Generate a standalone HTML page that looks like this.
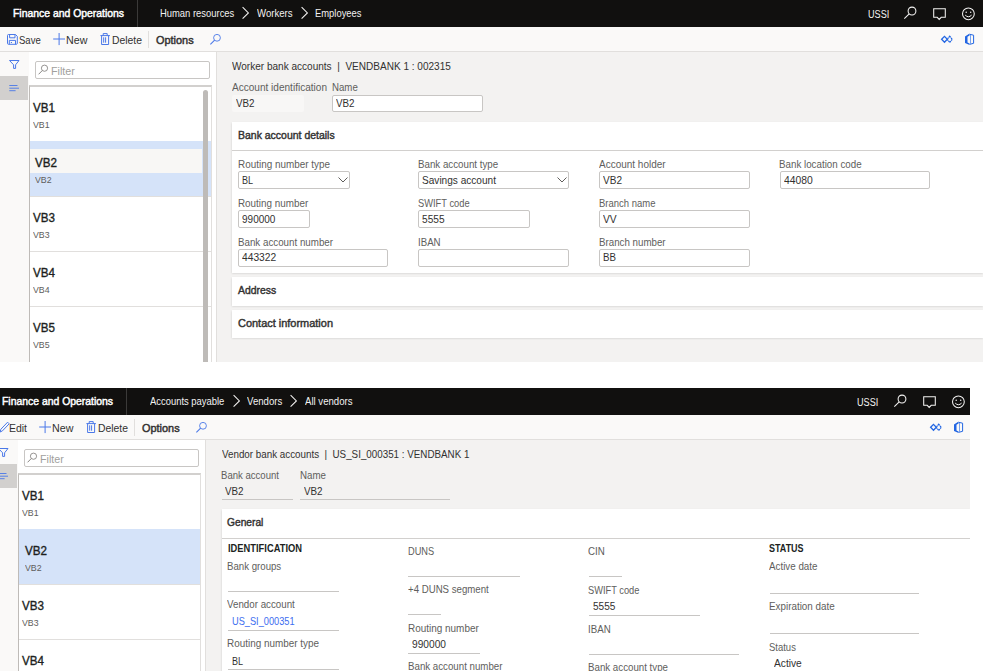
<!DOCTYPE html>
<html><head><meta charset="utf-8"><title>Bank accounts</title>
<style>
html,body{margin:0;padding:0;background:#fff;}
body{width:1000px;height:671px;position:relative;overflow:hidden;font-family:"Liberation Sans", sans-serif;}
.scr{position:absolute;overflow:hidden;}
.r{position:absolute;}
svg.r{overflow:visible;}
.t{position:absolute;line-height:1;white-space:nowrap;transform-origin:0 0;}
</style></head><body>
<div class="scr" style="left:0;top:0;width:983px;height:362px">
<div class="r" style="left:0.00px;top:0.00px;width:983.00px;height:27.00px;background:#11100f"></div>
<div class="t" style="left:13.00px;top:7.91px;font-size:10.5px;font-weight:400;color:#ffffff;transform:scaleX(0.9904);-webkit-text-stroke:0.45px #ffffff;">Finance and Operations</div>
<div class="r" style="left:136.50px;top:0.00px;width:1.00px;height:27.00px;background:#3b3a39"></div>
<div class="t" style="left:159.70px;top:8.11px;font-size:10.5px;font-weight:400;color:#f3f2f1;transform:scaleX(0.8965);">Human resources</div>
<svg class="r" style="left:242.30px;top:6px" width="9" height="15" viewBox="0 0 9 15"><path d="M0.6 1.1 L6.4 6.9 L0.6 12.7" fill="none" stroke="#f3f2f1" stroke-width="1.05"/></svg>
<div class="t" style="left:257.00px;top:8.11px;font-size:10.5px;font-weight:400;color:#f3f2f1;transform:scaleX(0.9150);">Workers</div>
<svg class="r" style="left:300.60px;top:6px" width="9" height="15" viewBox="0 0 9 15"><path d="M0.6 1.1 L6.4 6.9 L0.6 12.7" fill="none" stroke="#f3f2f1" stroke-width="1.05"/></svg>
<div class="t" style="left:314.90px;top:8.11px;font-size:10.5px;font-weight:400;color:#f3f2f1;transform:scaleX(0.8950);">Employees</div>
<div class="t" style="left:867.50px;top:9.83px;font-size:10.0px;font-weight:400;color:#f3f2f1;transform:scaleX(0.9124);">USSI</div>
<div class="r" style="left:0px;top:0;width:990px;height:27px">
<svg class="r" style="left:900px;top:4px" width="20" height="18" viewBox="900 4 20 18"><circle cx="912" cy="11" r="3.9" fill="none" stroke="#f3f2f1" stroke-width="1.05"/><path d="M909.2 13.8 L904.3 18.7" stroke="#f3f2f1" stroke-width="1.1"/></svg>
<svg class="r" style="left:930px;top:6px" width="20" height="16" viewBox="930 6 20 16"><path d="M933.7 8.7 H945.3 V17.3 H941.2 L939.2 19.4 L937.2 17.3 H933.7 Z" fill="none" stroke="#f3f2f1" stroke-width="1.05"/></svg>
<svg class="r" style="left:960px;top:6px" width="18" height="16" viewBox="960 6 18 16"><circle cx="968.4" cy="13.8" r="5.9" fill="none" stroke="#f3f2f1" stroke-width="1.05"/><circle cx="966.2" cy="12.2" r="0.75" fill="#f3f2f1"/><circle cx="970.7" cy="12.2" r="0.75" fill="#f3f2f1"/><path d="M965.2 15.1 Q968.4 18.4 971.6 15.1" fill="none" stroke="#f3f2f1" stroke-width="1"/></svg>
</div>
<div class="r" style="left:0.00px;top:27.00px;width:983.00px;height:24.00px;background:#faf9f8"></div>
<div class="r" style="left:0.00px;top:51.00px;width:983.00px;height:1.00px;background:#e1dfdd"></div>
<svg class="r" style="left:5px;top:32px" width="15" height="15" viewBox="5 32 15 15"><path d="M7.5 35.5 Q7.5 34.5 8.5 34.5 H15.5 L17.3 36.3 V43.3 Q17.3 44.3 16.3 44.3 H8.5 Q7.5 44.3 7.5 43.3 Z" fill="none" stroke="#4a78e8" stroke-width="1"/><path d="M9.6 34.5 V37.8 H15 V34.5 M9.3 44.3 V40.4 H15.5 V44.3" fill="none" stroke="#4a78e8" stroke-width="1"/><path d="M10.8 42.5 H12" stroke="#4a78e8" stroke-width="1"/></svg>
<div class="t" style="left:19.40px;top:35.06px;font-size:10.8px;font-weight:400;color:#323130;transform:scaleX(0.8818);">Save</div>
<div class="r" style="left:0px;top:0;width:240px;height:52px">
<svg class="r" style="left:50px;top:30px" width="18" height="18" viewBox="50 30 18 18"><path d="M59.1 33 V45.1 M53.2 39 H65" stroke="#4a78e8" stroke-width="1"/></svg>
<svg class="r" style="left:98px;top:31px" width="14" height="16" viewBox="98 31 14 16"><path d="M100.4 35.6 H109.9 M103.2 35.6 V33.6 H107.2 V35.6 M101.6 35.6 V44.5 H108.6 V35.6" fill="none" stroke="#4a78e8" stroke-width="1"/><path d="M103.7 37.3 V42.7 M105.6 37.3 V42.7" stroke="#4a78e8" stroke-width="1"/></svg>
</div>
<div class="t" style="left:66.40px;top:35.06px;font-size:10.8px;font-weight:400;color:#323130;transform:scaleX(0.9903);">New</div>
<div class="t" style="left:112.40px;top:35.06px;font-size:10.8px;font-weight:400;color:#323130;transform:scaleX(0.9610);">Delete</div>
<div class="r" style="left:148.00px;top:31.00px;width:1.00px;height:17.00px;background:#e1dfdd"></div>
<div class="t" style="left:155.80px;top:35.26px;font-size:10.8px;font-weight:400;color:#323130;transform:scaleX(1.0102);-webkit-text-stroke:0.45px #323130;">Options</div>
<div class="r" style="left:0px;top:0;width:240px;height:52px">
<svg class="r" style="left:206px;top:30px" width="18" height="18" viewBox="206 30 18 18"><circle cx="217" cy="37.8" r="3.4" fill="none" stroke="#4a78e8" stroke-width="0.9"/><path d="M214.6 40.2 L210.4 44.4" stroke="#4a78e8" stroke-width="1.1"/></svg>
</div>
<div class="r" style="left:0px;top:0;width:990px;height:52px">
<svg class="r" style="left:938px;top:32px" width="18" height="14" viewBox="938 32 18 14"><path d="M944.5 36.4 L947.3 39.3 L944.5 42.2 L941.6 39.3 Z" fill="none" stroke="#2266e3" stroke-width="1.3"/><path d="M949.7 36.2 L952.3 39.3 L949.7 42.4 L947.2 39.3 Z" fill="none" stroke="#2266e3" stroke-width="1.2" stroke-dasharray="1.6 0.5"/></svg>
<svg class="r" style="left:962px;top:31px" width="15" height="16" viewBox="962 31 15 16"><path d="M965 36.5 L969.6 33.5 V35.6 L967.5 36.7 V42.6 L969.6 43.4 V44.9 L965 43 Z" fill="#2266e3"/><path d="M969.8 34.3 L973.6 35.2 V43.3 L969.8 44.3" fill="none" stroke="#2266e3" stroke-width="1"/><path d="M970.5 35 V43.6" stroke="#2266e3" stroke-width="0.6"/></svg>
</div>
<div class="r" style="left:0.00px;top:52.00px;width:29.00px;height:310.00px;background:#faf9f8"></div>
<svg class="r" style="left:7px;top:58px" width="15" height="13" viewBox="7 58 15 13"><path d="M9.5 60.5 H19 L15.6 64.8 V68.4 H13.6 V64.8 Z" fill="none" stroke="#4a78e8" stroke-width="1" stroke-linejoin="round"/></svg>
<div class="r" style="left:0.00px;top:76.00px;width:28.00px;height:24.00px;background:#d2d0ce"></div>
<svg class="r" style="left:7px;top:82px" width="15" height="11" viewBox="7 82 15 11"><path d="M9.3 85.5 H17.5 M9.3 88.2 H19 M9.3 90.7 H15.6" stroke="#4a78e8" stroke-width="0.9"/></svg>
<div class="r" style="left:29.00px;top:52.00px;width:187.00px;height:310.00px;background:#ffffff"></div>
<div class="r" style="left:35.30px;top:61.20px;width:174.70px;height:17.40px;background:#fff;border:1px solid #c8c6c4;border-radius:2px;box-sizing:border-box"></div>
<svg class="r" style="left:36px;top:63px" width="14" height="14" viewBox="36 63 14 14"><circle cx="44.5" cy="68.2" r="3.1" fill="none" stroke="#8a8886" stroke-width="0.9"/><path d="M42.3 70.5 L38.6 74.3" stroke="#8a8886" stroke-width="1"/></svg>
<div class="t" style="left:51.40px;top:65.86px;font-size:10.8px;font-weight:400;color:#a19f9d;transform:scaleX(0.9917);">Filter</div>
<div class="r" style="left:29.00px;top:85.00px;width:182.50px;height:277.00px;border:1px solid #e1dfdd;border-left:1px solid #bebbb8;border-top:2px solid #d2d0ce;box-sizing:border-box;border-bottom:none"></div>
<div class="t" style="left:32.90px;top:101.53px;font-size:12.6px;font-weight:400;color:#201f1e;transform:scaleX(0.9239);-webkit-text-stroke:0.35px #201f1e;">VB1</div>
<div class="t" style="left:33.00px;top:120.47px;font-size:9.6px;font-weight:400;color:#605e5c;transform:scaleX(0.9151);">VB1</div>
<div class="r" style="left:30.00px;top:141.00px;width:180.50px;height:1.00px;background:#e1dfdd"></div>
<div class="r" style="left:30.00px;top:141.00px;width:180.50px;height:8.00px;background:#d5e3f9"></div>
<div class="r" style="left:30.00px;top:149.00px;width:180.50px;height:24.00px;background:#f8f7f5"></div>
<div class="r" style="left:202.00px;top:149.00px;width:8.50px;height:24.00px;background:#d5e3f9"></div>
<div class="r" style="left:30.00px;top:173.00px;width:180.50px;height:23.00px;background:#d5e3f9"></div>
<div class="t" style="left:35.30px;top:156.53px;font-size:12.6px;font-weight:400;color:#201f1e;transform:scaleX(0.9239);-webkit-text-stroke:0.35px #201f1e;">VB2</div>
<div class="t" style="left:35.40px;top:175.47px;font-size:9.6px;font-weight:400;color:#605e5c;transform:scaleX(0.9151);">VB2</div>
<div class="r" style="left:30.00px;top:196.00px;width:180.50px;height:1.00px;background:#e1dfdd"></div>
<div class="t" style="left:32.90px;top:211.53px;font-size:12.6px;font-weight:400;color:#201f1e;transform:scaleX(0.9239);-webkit-text-stroke:0.35px #201f1e;">VB3</div>
<div class="t" style="left:33.00px;top:230.47px;font-size:9.6px;font-weight:400;color:#605e5c;transform:scaleX(0.9151);">VB3</div>
<div class="r" style="left:30.00px;top:251.00px;width:180.50px;height:1.00px;background:#e1dfdd"></div>
<div class="t" style="left:32.90px;top:266.53px;font-size:12.6px;font-weight:400;color:#201f1e;transform:scaleX(0.9239);-webkit-text-stroke:0.35px #201f1e;">VB4</div>
<div class="t" style="left:33.00px;top:285.47px;font-size:9.6px;font-weight:400;color:#605e5c;transform:scaleX(0.9151);">VB4</div>
<div class="r" style="left:30.00px;top:306.00px;width:180.50px;height:1.00px;background:#e1dfdd"></div>
<div class="t" style="left:32.90px;top:321.53px;font-size:12.6px;font-weight:400;color:#201f1e;transform:scaleX(0.9239);-webkit-text-stroke:0.35px #201f1e;">VB5</div>
<div class="t" style="left:33.00px;top:340.47px;font-size:9.6px;font-weight:400;color:#605e5c;transform:scaleX(0.9151);">VB5</div>
<div class="r" style="left:202.50px;top:89.50px;width:5.00px;height:272.50px;background:#bebbb8;border-radius:2.5px 2.5px 0 0"></div>
<div class="r" style="left:216.00px;top:52.00px;width:767.00px;height:310.00px;background:#f3f2f1"></div>
<div class="r" style="left:216.00px;top:52.00px;width:1.00px;height:310.00px;background:#e1dfdd"></div>
<div class="t" style="left:231.60px;top:60.89px;font-size:11.0px;font-weight:400;color:#323130;transform:scaleX(0.9121);">Worker bank accounts&nbsp; |&nbsp; VENDBANK 1 : 002315</div>
<div class="t" style="left:231.60px;top:82.96px;font-size:10.2px;font-weight:400;color:#605e5c;transform:scaleX(0.9867);">Account identification</div>
<div class="t" style="left:332.40px;top:82.96px;font-size:10.2px;font-weight:400;color:#605e5c;transform:scaleX(0.9490);">Name</div>
<div class="r" style="left:232.00px;top:95.00px;width:71.70px;height:17.00px;background:#f8f7f6;border-radius:2px"></div>
<div class="t" style="left:235.60px;top:98.09px;font-size:11.0px;font-weight:400;color:#323130;transform:scaleX(0.8944);">VB2</div>
<div class="r" style="left:332.20px;top:94.60px;width:151.20px;height:17.60px;background:#fff;border:1px solid #c8c6c4;border-radius:2px;box-sizing:border-box"></div>
<div class="t" style="left:335.90px;top:98.09px;font-size:11.0px;font-weight:400;color:#323130;transform:scaleX(0.8944);">VB2</div>
<div class="r" style="left:231.80px;top:121.60px;width:751.20px;height:151.20px;background:#fff;box-shadow:0 1.3px 2.2px rgba(0,0,0,0.16)"></div>
<div class="t" style="left:237.80px;top:130.79px;font-size:10.4px;font-weight:400;color:#323130;transform:scaleX(1.0084);-webkit-text-stroke:0.4px #323130;">Bank account details</div>
<div class="r" style="left:231.80px;top:150.40px;width:751.20px;height:1.00px;background:#d2d0ce"></div>
<div class="t" style="left:237.80px;top:159.66px;font-size:10.2px;font-weight:400;color:#605e5c;transform:scaleX(0.9727);">Routing number type</div>
<div class="r" style="left:238.40px;top:171.40px;width:111.20px;height:17.60px;background:#fff;border:1px solid #c8c6c4;border-radius:2px;box-sizing:border-box"></div>
<div class="t" style="left:242.10px;top:174.89px;font-size:11.0px;font-weight:400;color:#323130;transform:scaleX(0.8241);">BL</div>
<svg class="r" style="left:337.6px;top:176.9px" width="10" height="6" viewBox="0 0 10 6"><path d="M0.5 0.5 L5 5 L9.5 0.5" fill="none" stroke="#605e5c" stroke-width="1"/></svg>
<div class="t" style="left:237.80px;top:198.76px;font-size:10.2px;font-weight:400;color:#605e5c;transform:scaleX(0.9683);">Routing number</div>
<div class="r" style="left:238.40px;top:210.20px;width:71.40px;height:17.60px;background:#fff;border:1px solid #c8c6c4;border-radius:2px;box-sizing:border-box"></div>
<div class="t" style="left:242.10px;top:213.69px;font-size:11.0px;font-weight:400;color:#323130;transform:scaleX(0.9096);">990000</div>
<div class="t" style="left:237.80px;top:237.56px;font-size:10.2px;font-weight:400;color:#605e5c;transform:scaleX(0.9585);">Bank account number</div>
<div class="r" style="left:238.40px;top:249.00px;width:149.80px;height:17.60px;background:#fff;border:1px solid #c8c6c4;border-radius:2px;box-sizing:border-box"></div>
<div class="t" style="left:242.10px;top:252.49px;font-size:11.0px;font-weight:400;color:#323130;transform:scaleX(0.9314);">443322</div>
<div class="t" style="left:417.80px;top:159.66px;font-size:10.2px;font-weight:400;color:#605e5c;transform:scaleX(0.9567);">Bank account type</div>
<div class="r" style="left:418.40px;top:171.40px;width:150.20px;height:17.60px;background:#fff;border:1px solid #c8c6c4;border-radius:2px;box-sizing:border-box"></div>
<div class="t" style="left:422.10px;top:174.89px;font-size:11.0px;font-weight:400;color:#323130;transform:scaleX(0.9168);">Savings account</div>
<svg class="r" style="left:556.6px;top:176.9px" width="10" height="6" viewBox="0 0 10 6"><path d="M0.5 0.5 L5 5 L9.5 0.5" fill="none" stroke="#605e5c" stroke-width="1"/></svg>
<div class="t" style="left:417.80px;top:198.76px;font-size:10.2px;font-weight:400;color:#605e5c;transform:scaleX(0.9143);">SWIFT code</div>
<div class="r" style="left:418.40px;top:210.20px;width:112.00px;height:17.60px;background:#fff;border:1px solid #c8c6c4;border-radius:2px;box-sizing:border-box"></div>
<div class="t" style="left:422.10px;top:213.69px;font-size:11.0px;font-weight:400;color:#323130;transform:scaleX(0.9230);">5555</div>
<div class="t" style="left:417.80px;top:237.56px;font-size:10.2px;font-weight:400;color:#605e5c;transform:scaleX(0.9503);">IBAN</div>
<div class="r" style="left:418.40px;top:249.00px;width:150.20px;height:17.60px;background:#fff;border:1px solid #c8c6c4;border-radius:2px;box-sizing:border-box"></div>
<div class="t" style="left:598.60px;top:159.66px;font-size:10.2px;font-weight:400;color:#605e5c;transform:scaleX(0.9799);">Account holder</div>
<div class="r" style="left:599.20px;top:171.40px;width:150.40px;height:17.60px;background:#fff;border:1px solid #c8c6c4;border-radius:2px;box-sizing:border-box"></div>
<div class="t" style="left:602.90px;top:174.89px;font-size:11.0px;font-weight:400;color:#323130;transform:scaleX(0.9136);">VB2</div>
<div class="t" style="left:598.60px;top:198.76px;font-size:10.2px;font-weight:400;color:#605e5c;transform:scaleX(0.9308);">Branch name</div>
<div class="r" style="left:599.20px;top:210.20px;width:150.40px;height:17.60px;background:#fff;border:1px solid #c8c6c4;border-radius:2px;box-sizing:border-box"></div>
<div class="t" style="left:602.90px;top:213.69px;font-size:11.0px;font-weight:400;color:#323130;transform:scaleX(0.9328);">VV</div>
<div class="t" style="left:598.60px;top:237.56px;font-size:10.2px;font-weight:400;color:#605e5c;transform:scaleX(0.9561);">Branch number</div>
<div class="r" style="left:599.20px;top:249.00px;width:150.40px;height:17.60px;background:#fff;border:1px solid #c8c6c4;border-radius:2px;box-sizing:border-box"></div>
<div class="t" style="left:602.90px;top:252.49px;font-size:11.0px;font-weight:400;color:#323130;transform:scaleX(0.8851);">BB</div>
<div class="t" style="left:779.40px;top:159.66px;font-size:10.2px;font-weight:400;color:#605e5c;transform:scaleX(0.9594);">Bank location code</div>
<div class="r" style="left:780.00px;top:171.40px;width:150.00px;height:17.60px;background:#fff;border:1px solid #c8c6c4;border-radius:2px;box-sizing:border-box"></div>
<div class="t" style="left:783.70px;top:174.89px;font-size:11.0px;font-weight:400;color:#323130;transform:scaleX(0.9414);">44080</div>
<div class="r" style="left:231.80px;top:277.20px;width:751.20px;height:28.70px;background:#fff;box-shadow:0 1.3px 2.2px rgba(0,0,0,0.16)"></div>
<div class="t" style="left:237.80px;top:286.39px;font-size:10.4px;font-weight:400;color:#323130;transform:scaleX(1.0020);-webkit-text-stroke:0.4px #323130;">Address</div>
<div class="r" style="left:231.80px;top:310.30px;width:751.20px;height:27.60px;background:#fff;box-shadow:0 1.3px 2.2px rgba(0,0,0,0.16)"></div>
<div class="t" style="left:237.80px;top:319.49px;font-size:10.4px;font-weight:400;color:#323130;transform:scaleX(1.0543);-webkit-text-stroke:0.4px #323130;">Contact information</div>
</div>
<div class="scr" style="left:-11px;top:388px;width:981px;height:283px">
<div class="r" style="left:0.00px;top:0.00px;width:981.00px;height:27.00px;background:#11100f"></div>
<div class="t" style="left:13.00px;top:7.91px;font-size:10.5px;font-weight:400;color:#ffffff;transform:scaleX(0.9904);-webkit-text-stroke:0.45px #ffffff;">Finance and Operations</div>
<div class="r" style="left:136.50px;top:0.00px;width:1.00px;height:27.00px;background:#3b3a39"></div>
<div class="t" style="left:160.70px;top:8.11px;font-size:10.5px;font-weight:400;color:#f3f2f1;transform:scaleX(0.8964);">Accounts payable</div>
<svg class="r" style="left:243.50px;top:6px" width="9" height="15" viewBox="0 0 9 15"><path d="M0.6 1.1 L6.4 6.9 L0.6 12.7" fill="none" stroke="#f3f2f1" stroke-width="1.05"/></svg>
<div class="t" style="left:258.20px;top:8.11px;font-size:10.5px;font-weight:400;color:#f3f2f1;transform:scaleX(0.9161);">Vendors</div>
<svg class="r" style="left:301.20px;top:6px" width="9" height="15" viewBox="0 0 9 15"><path d="M0.6 1.1 L6.4 6.9 L0.6 12.7" fill="none" stroke="#f3f2f1" stroke-width="1.05"/></svg>
<div class="t" style="left:316.20px;top:8.11px;font-size:10.5px;font-weight:400;color:#f3f2f1;transform:scaleX(0.9143);">All vendors</div>
<div class="t" style="left:868.00px;top:9.83px;font-size:10.0px;font-weight:400;color:#f3f2f1;transform:scaleX(0.9124);">USSI</div>
<div class="r" style="left:0.5px;top:0;width:990px;height:27px">
<svg class="r" style="left:900px;top:4px" width="20" height="18" viewBox="900 4 20 18"><circle cx="912" cy="11" r="3.9" fill="none" stroke="#f3f2f1" stroke-width="1.05"/><path d="M909.2 13.8 L904.3 18.7" stroke="#f3f2f1" stroke-width="1.1"/></svg>
<svg class="r" style="left:930px;top:6px" width="20" height="16" viewBox="930 6 20 16"><path d="M933.7 8.7 H945.3 V17.3 H941.2 L939.2 19.4 L937.2 17.3 H933.7 Z" fill="none" stroke="#f3f2f1" stroke-width="1.05"/></svg>
<svg class="r" style="left:960px;top:6px" width="18" height="16" viewBox="960 6 18 16"><circle cx="968.4" cy="13.8" r="5.9" fill="none" stroke="#f3f2f1" stroke-width="1.05"/><circle cx="966.2" cy="12.2" r="0.75" fill="#f3f2f1"/><circle cx="970.7" cy="12.2" r="0.75" fill="#f3f2f1"/><path d="M965.2 15.1 Q968.4 18.4 971.6 15.1" fill="none" stroke="#f3f2f1" stroke-width="1"/></svg>
</div>
<div class="r" style="left:0.00px;top:27.00px;width:981.00px;height:24.00px;background:#faf9f8"></div>
<div class="r" style="left:0.00px;top:51.00px;width:981.00px;height:1.00px;background:#e1dfdd"></div>
<svg class="r" style="left:8px;top:30px" width="14" height="16" viewBox="8 30 14 16"><path d="M11.2 44 L11.8 41.3 L18.6 34.2 L20.2 35.8 L13.4 42.9 Z" fill="none" stroke="#4a78e8" stroke-width="1"/></svg>
<div class="t" style="left:20.10px;top:35.06px;font-size:10.8px;font-weight:400;color:#323130;transform:scaleX(0.9673);">Edit</div>
<div class="r" style="left:-3px;top:0;width:240px;height:52px">
<svg class="r" style="left:50px;top:30px" width="18" height="18" viewBox="50 30 18 18"><path d="M59.1 33 V45.1 M53.2 39 H65" stroke="#4a78e8" stroke-width="1"/></svg>
<svg class="r" style="left:98px;top:31px" width="14" height="16" viewBox="98 31 14 16"><path d="M100.4 35.6 H109.9 M103.2 35.6 V33.6 H107.2 V35.6 M101.6 35.6 V44.5 H108.6 V35.6" fill="none" stroke="#4a78e8" stroke-width="1"/><path d="M103.7 37.3 V42.7 M105.6 37.3 V42.7" stroke="#4a78e8" stroke-width="1"/></svg>
</div>
<div class="t" style="left:63.40px;top:35.06px;font-size:10.8px;font-weight:400;color:#323130;transform:scaleX(0.9903);">New</div>
<div class="t" style="left:109.40px;top:35.06px;font-size:10.8px;font-weight:400;color:#323130;transform:scaleX(0.9610);">Delete</div>
<div class="r" style="left:145.00px;top:31.00px;width:1.00px;height:17.00px;background:#e1dfdd"></div>
<div class="t" style="left:152.80px;top:35.26px;font-size:10.8px;font-weight:400;color:#323130;transform:scaleX(1.0102);-webkit-text-stroke:0.45px #323130;">Options</div>
<div class="r" style="left:-3px;top:0;width:240px;height:52px">
<svg class="r" style="left:206px;top:30px" width="18" height="18" viewBox="206 30 18 18"><circle cx="217" cy="37.8" r="3.4" fill="none" stroke="#4a78e8" stroke-width="0.9"/><path d="M214.6 40.2 L210.4 44.4" stroke="#4a78e8" stroke-width="1.1"/></svg>
</div>
<div class="r" style="left:0.3px;top:0;width:990px;height:52px">
<svg class="r" style="left:938px;top:32px" width="18" height="14" viewBox="938 32 18 14"><path d="M944.5 36.4 L947.3 39.3 L944.5 42.2 L941.6 39.3 Z" fill="none" stroke="#2266e3" stroke-width="1.3"/><path d="M949.7 36.2 L952.3 39.3 L949.7 42.4 L947.2 39.3 Z" fill="none" stroke="#2266e3" stroke-width="1.2" stroke-dasharray="1.6 0.5"/></svg>
<svg class="r" style="left:962px;top:31px" width="15" height="16" viewBox="962 31 15 16"><path d="M965 36.5 L969.6 33.5 V35.6 L967.5 36.7 V42.6 L969.6 43.4 V44.9 L965 43 Z" fill="#2266e3"/><path d="M969.8 34.3 L973.6 35.2 V43.3 L969.8 44.3" fill="none" stroke="#2266e3" stroke-width="1"/><path d="M970.5 35 V43.6" stroke="#2266e3" stroke-width="0.6"/></svg>
</div>
<div class="r" style="left:0.00px;top:52.00px;width:29.00px;height:231.00px;background:#faf9f8"></div>
<svg class="r" style="left:7px;top:58px" width="15" height="13" viewBox="7 58 15 13"><path d="M9.5 60.5 H19 L15.6 64.8 V68.4 H13.6 V64.8 Z" fill="none" stroke="#4a78e8" stroke-width="1" stroke-linejoin="round"/></svg>
<div class="r" style="left:0.00px;top:76.00px;width:28.00px;height:24.00px;background:#d2d0ce"></div>
<svg class="r" style="left:7px;top:82px" width="15" height="11" viewBox="7 82 15 11"><path d="M9.3 85.5 H17.5 M9.3 88.2 H19 M9.3 90.7 H15.6" stroke="#4a78e8" stroke-width="0.9"/></svg>
<div class="r" style="left:29.00px;top:52.00px;width:187.00px;height:231.00px;background:#ffffff"></div>
<div class="r" style="left:35.30px;top:61.20px;width:174.70px;height:17.40px;background:#fff;border:1px solid #c8c6c4;border-radius:2px;box-sizing:border-box"></div>
<svg class="r" style="left:36px;top:63px" width="14" height="14" viewBox="36 63 14 14"><circle cx="44.5" cy="68.2" r="3.1" fill="none" stroke="#8a8886" stroke-width="0.9"/><path d="M42.3 70.5 L38.6 74.3" stroke="#8a8886" stroke-width="1"/></svg>
<div class="t" style="left:51.40px;top:65.86px;font-size:10.8px;font-weight:400;color:#a19f9d;transform:scaleX(0.9917);">Filter</div>
<div class="r" style="left:29.00px;top:85.00px;width:182.50px;height:198.00px;border:1px solid #e1dfdd;border-left:1px solid #bebbb8;border-top:2px solid #d2d0ce;box-sizing:border-box;border-bottom:none"></div>
<div class="t" style="left:32.90px;top:101.53px;font-size:12.6px;font-weight:400;color:#201f1e;transform:scaleX(0.9239);-webkit-text-stroke:0.35px #201f1e;">VB1</div>
<div class="t" style="left:33.00px;top:120.47px;font-size:9.6px;font-weight:400;color:#605e5c;transform:scaleX(0.9151);">VB1</div>
<div class="r" style="left:30.00px;top:141.00px;width:180.50px;height:1.00px;background:#e1dfdd"></div>
<div class="r" style="left:30.00px;top:141.00px;width:180.50px;height:55.00px;background:#d5e3f9"></div>
<div class="t" style="left:35.50px;top:156.53px;font-size:12.6px;font-weight:400;color:#201f1e;transform:scaleX(0.9239);-webkit-text-stroke:0.35px #201f1e;">VB2</div>
<div class="t" style="left:35.60px;top:175.47px;font-size:9.6px;font-weight:400;color:#605e5c;transform:scaleX(0.9151);">VB2</div>
<div class="r" style="left:30.00px;top:196.00px;width:180.50px;height:1.00px;background:#e1dfdd"></div>
<div class="t" style="left:32.90px;top:211.53px;font-size:12.6px;font-weight:400;color:#201f1e;transform:scaleX(0.9239);-webkit-text-stroke:0.35px #201f1e;">VB3</div>
<div class="t" style="left:33.00px;top:230.47px;font-size:9.6px;font-weight:400;color:#605e5c;transform:scaleX(0.9151);">VB3</div>
<div class="r" style="left:30.00px;top:251.00px;width:180.50px;height:1.00px;background:#e1dfdd"></div>
<div class="t" style="left:32.90px;top:266.53px;font-size:12.6px;font-weight:400;color:#201f1e;transform:scaleX(0.9239);-webkit-text-stroke:0.35px #201f1e;">VB4</div>
<div class="t" style="left:33.00px;top:285.47px;font-size:9.6px;font-weight:400;color:#605e5c;transform:scaleX(0.9151);">VB4</div>
<div class="r" style="left:216.00px;top:52.00px;width:765.00px;height:231.00px;background:#f3f2f1"></div>
<div class="r" style="left:216.00px;top:52.00px;width:1.00px;height:231.00px;background:#e1dfdd"></div>
<div class="t" style="left:233.20px;top:60.99px;font-size:11.0px;font-weight:400;color:#323130;transform:scaleX(0.8918);">Vendor bank accounts&nbsp; |&nbsp; US_SI_000351 : VENDBANK 1</div>
<div class="t" style="left:232.40px;top:82.56px;font-size:10.2px;font-weight:400;color:#605e5c;transform:scaleX(0.9395);">Bank account</div>
<div class="t" style="left:310.80px;top:82.56px;font-size:10.2px;font-weight:400;color:#605e5c;transform:scaleX(0.9563);">Name</div>
<div class="t" style="left:236.40px;top:97.69px;font-size:11.0px;font-weight:400;color:#323130;transform:scaleX(0.8944);">VB2</div>
<div class="r" style="left:233.00px;top:111.00px;width:71.20px;height:1.00px;background:#c8c6c4"></div>
<div class="t" style="left:314.80px;top:97.69px;font-size:11.0px;font-weight:400;color:#323130;transform:scaleX(0.8944);">VB2</div>
<div class="r" style="left:311.40px;top:111.00px;width:149.60px;height:1.00px;background:#c8c6c4"></div>
<div class="r" style="left:232.50px;top:121.40px;width:748.50px;height:171.60px;background:#fff;box-shadow:0 1.3px 2.2px rgba(0,0,0,0.16)"></div>
<div class="t" style="left:238.40px;top:130.39px;font-size:10.4px;font-weight:400;color:#323130;transform:scaleX(0.9846);-webkit-text-stroke:0.4px #323130;">General</div>
<div class="r" style="left:232.50px;top:150.20px;width:748.50px;height:1.00px;background:#d2d0ce"></div>
<div class="t" style="left:238.50px;top:155.85px;font-size:10.1px;font-weight:700;color:#201f1e;transform:scaleX(0.9250);">IDENTIFICATION</div>
<div class="t" style="left:238.40px;top:174.16px;font-size:10.2px;font-weight:400;color:#605e5c;transform:scaleX(0.9475);">Bank groups</div>
<div class="r" style="left:239.00px;top:203.00px;width:111.00px;height:1.00px;background:#c8c6c4"></div>
<div class="t" style="left:238.40px;top:211.66px;font-size:10.2px;font-weight:400;color:#605e5c;transform:scaleX(0.9575);">Vendor account</div>
<div class="t" style="left:242.60px;top:227.69px;font-size:11.0px;font-weight:400;color:#3c6df0;transform:scaleX(0.8389);">US_SI_000351</div>
<div class="r" style="left:239.00px;top:241.50px;width:111.00px;height:1.00px;background:#c8c6c4"></div>
<div class="t" style="left:238.40px;top:250.96px;font-size:10.2px;font-weight:400;color:#605e5c;transform:scaleX(0.9727);">Routing number type</div>
<div class="t" style="left:242.60px;top:267.59px;font-size:11.0px;font-weight:400;color:#323130;transform:scaleX(0.8241);">BL</div>
<div class="r" style="left:239.00px;top:281.40px;width:111.00px;height:1.00px;background:#c8c6c4"></div>
<div class="t" style="left:418.80px;top:159.36px;font-size:10.2px;font-weight:400;color:#605e5c;transform:scaleX(0.9074);">DUNS</div>
<div class="r" style="left:419.40px;top:187.50px;width:111.30px;height:1.00px;background:#c8c6c4"></div>
<div class="t" style="left:418.80px;top:197.16px;font-size:10.2px;font-weight:400;color:#605e5c;transform:scaleX(0.9481);">+4 DUNS segment</div>
<div class="r" style="left:419.40px;top:226.20px;width:32.60px;height:1.00px;background:#c8c6c4"></div>
<div class="t" style="left:418.80px;top:236.46px;font-size:10.2px;font-weight:400;color:#605e5c;transform:scaleX(0.9766);">Routing number</div>
<div class="t" style="left:423.00px;top:250.69px;font-size:11.0px;font-weight:400;color:#323130;transform:scaleX(0.9260);">990000</div>
<div class="r" style="left:419.40px;top:265.20px;width:71.40px;height:1.00px;background:#c8c6c4"></div>
<div class="t" style="left:418.80px;top:274.46px;font-size:10.2px;font-weight:400;color:#605e5c;transform:scaleX(0.9535);">Bank account number</div>
<div class="t" style="left:599.20px;top:159.36px;font-size:10.2px;font-weight:400;color:#605e5c;transform:scaleX(0.9574);">CIN</div>
<div class="r" style="left:599.80px;top:187.50px;width:32.80px;height:1.00px;background:#c8c6c4"></div>
<div class="t" style="left:599.20px;top:198.16px;font-size:10.2px;font-weight:400;color:#605e5c;transform:scaleX(0.9107);">SWIFT code</div>
<div class="t" style="left:604.10px;top:212.99px;font-size:11.0px;font-weight:400;color:#323130;transform:scaleX(0.9149);">5555</div>
<div class="r" style="left:599.80px;top:226.70px;width:111.40px;height:1.00px;background:#c8c6c4"></div>
<div class="t" style="left:599.20px;top:236.76px;font-size:10.2px;font-weight:400;color:#605e5c;transform:scaleX(0.9545);">IBAN</div>
<div class="r" style="left:599.80px;top:265.70px;width:149.80px;height:1.00px;background:#c8c6c4"></div>
<div class="t" style="left:599.20px;top:275.16px;font-size:10.2px;font-weight:400;color:#605e5c;transform:scaleX(0.9543);">Bank account type</div>
<div class="t" style="left:780.20px;top:156.05px;font-size:10.1px;font-weight:700;color:#201f1e;transform:scaleX(0.8897);">STATUS</div>
<div class="t" style="left:780.10px;top:174.16px;font-size:10.2px;font-weight:400;color:#605e5c;transform:scaleX(0.9622);">Active date</div>
<div class="r" style="left:780.70px;top:205.10px;width:149.80px;height:1.00px;background:#c8c6c4"></div>
<div class="t" style="left:780.10px;top:214.16px;font-size:10.2px;font-weight:400;color:#605e5c;transform:scaleX(0.9666);">Expiration date</div>
<div class="r" style="left:780.70px;top:245.00px;width:149.80px;height:1.00px;background:#c8c6c4"></div>
<div class="t" style="left:780.10px;top:255.16px;font-size:10.2px;font-weight:400;color:#605e5c;transform:scaleX(0.9311);">Status</div>
<div class="t" style="left:784.70px;top:269.69px;font-size:11.0px;font-weight:400;color:#323130;transform:scaleX(0.9276);">Active</div>
</div>
</body></html>
